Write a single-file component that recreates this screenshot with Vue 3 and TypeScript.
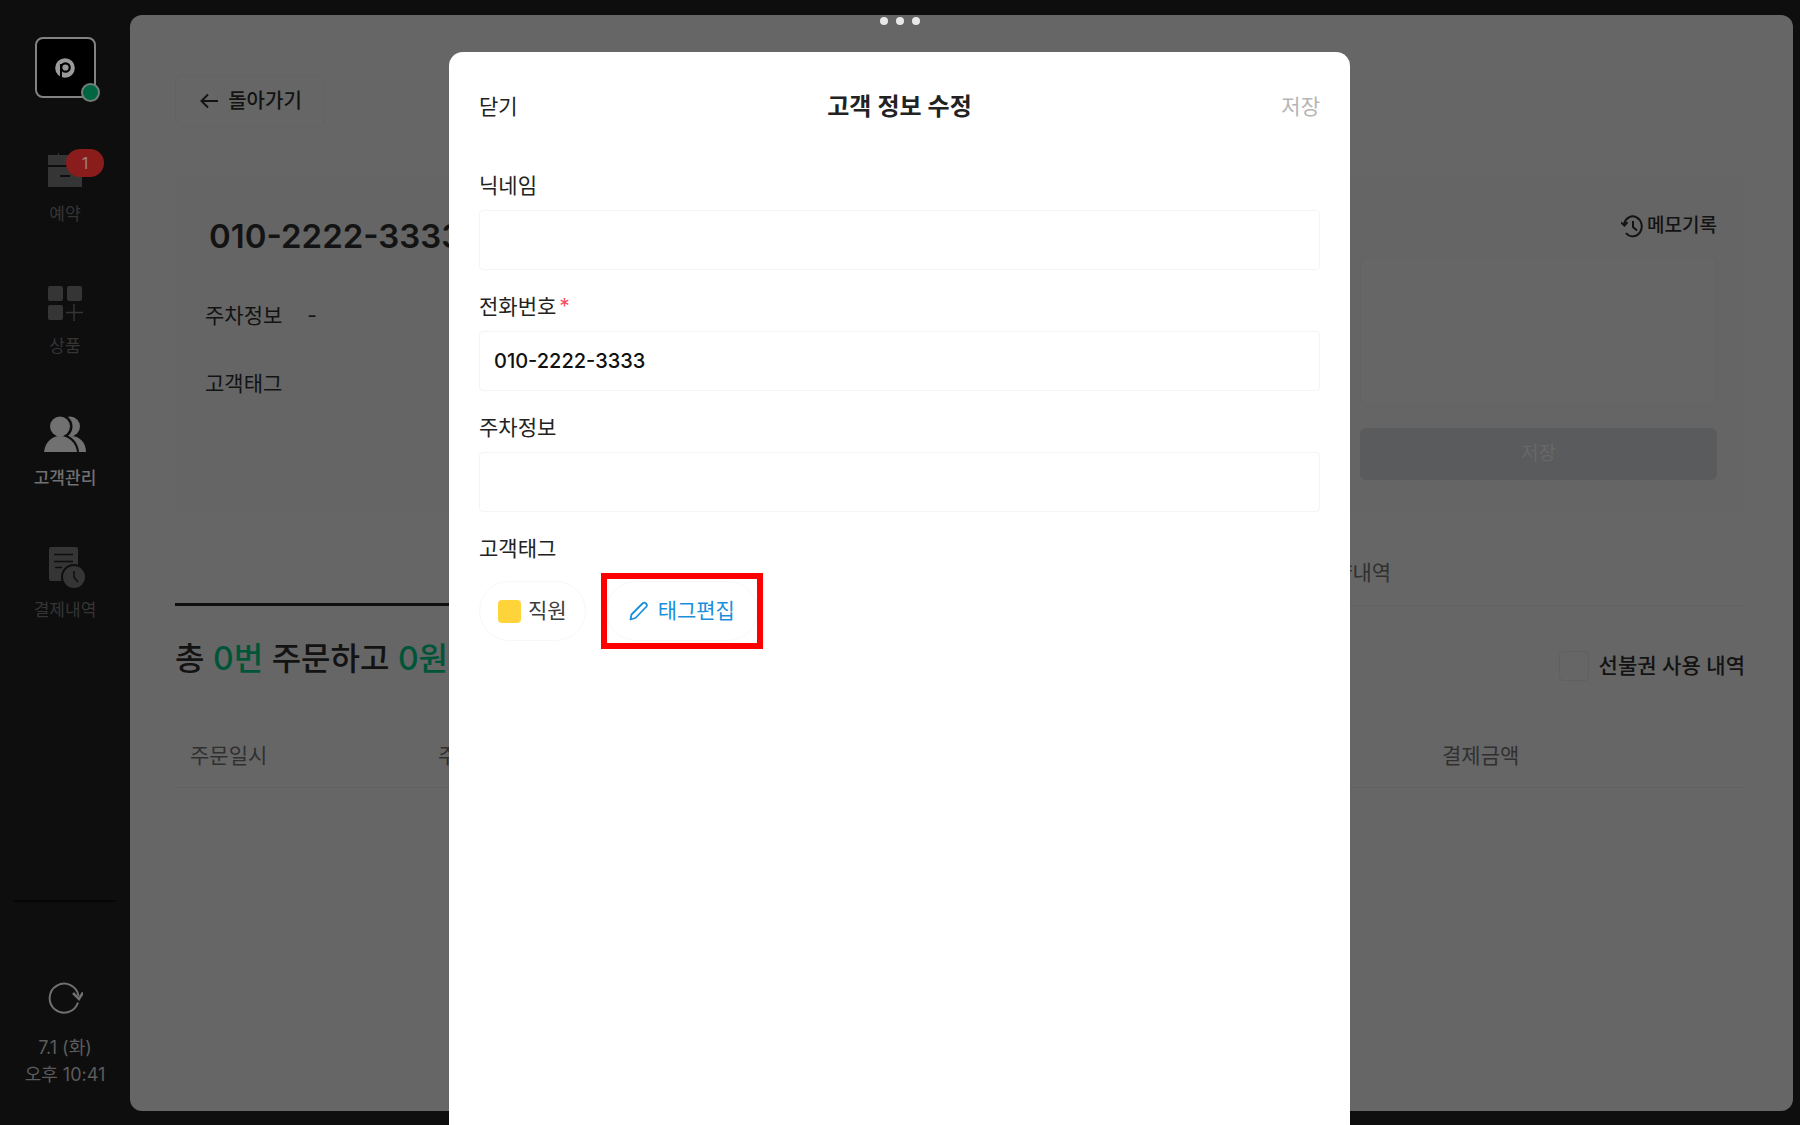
<script setup lang="ts">
import { ref } from 'vue'

interface MenuItem {
  id: 'booking' | 'product' | 'customer' | 'payment'
  label: string
  badge?: number
}

const menu: MenuItem[] = [
  { id: 'booking', label: '예약', badge: 1 },
  { id: 'product', label: '상품' },
  { id: 'customer', label: '고객관리' },
  { id: 'payment', label: '결제내역' },
]
const current = ref<MenuItem['id']>('customer')

const nickname = ref('')
const phone = ref('010-2222-3333')
const parking = ref('')
const memo = ref('')
const prepaidOnly = ref(false)
</script>

<template>
  <div class="app">
    <aside class="sidebar">
      <div class="logo">
        <svg width="20" height="20" viewBox="0 0 20 20" aria-hidden="true">
          <circle cx="10" cy="10" r="9.800" fill="#9a9a9a" />
          <path d="M6 20V6" stroke="#000" stroke-width="2" />
          <circle cx="10.500" cy="9.500" r="4.200" fill="#9a9a9a" stroke="#000" stroke-width="2.200" />
        </svg>
        <span class="status"></span>
      </div>

      <nav class="menu">
        <button
          v-for="item in menu"
          :key="item.id"
          type="button"
          class="menu-item"
          :class="{ active: item.id === current }"
        >
          <span class="menu-icon">
            <svg v-if="item.id === 'booking'" width="44" height="44" viewBox="0 0 44 44" fill="currentColor">
              <path d="M5 6h10V4h1v2h23v10H5zM5 18h34v20H5z" />
              <path d="M17 27h10" stroke="#0e0e0e" stroke-width="2" />
            </svg>
            <svg v-else-if="item.id === 'product'" width="44" height="44" viewBox="0 0 44 44" fill="currentColor">
              <rect x="5" y="5" width="15" height="15" rx="2" />
              <rect x="24" y="5" width="15" height="15" rx="2" />
              <rect x="5" y="24" width="15" height="15" rx="2" />
              <path d="M31 23v17M23 31.500h17" stroke="currentColor" stroke-width="1.500" />
            </svg>
            <svg v-else-if="item.id === 'customer'" width="44" height="44" viewBox="0 0 44 44" fill="currentColor">
              <circle cx="27" cy="13.500" r="10" />
              <path d="M15 39c0-9 6-16 13-16 8 0 15 6 15 16z" />
              <path d="M0 40c0-10 8-15 17.500-17.500S36 30 36 40z" fill="#0e0e0e" />
              <circle cx="17.500" cy="13.500" r="12" fill="#0e0e0e" />
              <circle cx="17" cy="13.500" r="10" />
              <path d="M1 39c1-9 7-16 16-16s16 7 17 16z" />
            </svg>
            <svg v-else width="44" height="44" viewBox="0 0 44 44" fill="currentColor">
              <rect x="6" y="2" width="29" height="34" rx="2" />
              <path d="M11 9.500h19M11 16.500h19M12 22.500h7" stroke="#0e0e0e" stroke-width="1.500" />
              <circle cx="31" cy="32" r="13" fill="#0e0e0e" />
              <circle cx="31" cy="32" r="11" />
              <path d="M31 26v6l4 5" fill="none" stroke="#0e0e0e" stroke-width="1.500" />
            </svg>
            <span v-if="item.badge" class="badge">{{ item.badge }}</span>
          </span>
          <span>{{ item.label }}</span>
        </button>
      </nav>

      <div class="sidebar-foot">
        <button type="button" class="refresh" aria-label="새로고침">
          <svg width="36" height="34" viewBox="0 0 36 34" fill="none" stroke="#707070" stroke-width="2">
            <path d="M31 22.500A14.500 14.500 0 1 1 31.500 16" />
            <path d="M26 13l6 6 4-6.500" stroke-width="2.500" />
          </svg>
        </button>
        <p class="clock">7.1 (화)<br />오후 10:41</p>
      </div>
    </aside>

    <main class="panel">
      <button type="button" class="back">
        <svg width="18" height="16" viewBox="0 0 18 16" fill="none" stroke="currentColor" stroke-width="2">
          <path d="M18 8H1.500M8 1.500L1.500 8 8 14.500" />
        </svg>
        돌아가기
      </button>

      <section class="profile">
        <div class="profile-info">
          <h1>010-2222-3333</h1>
          <dl>
            <div><dt>주차정보</dt><dd>-</dd></div>
            <div><dt>고객태그</dt><dd></dd></div>
          </dl>
        </div>
        <div class="memo">
          <button type="button" class="memo-log">
            <svg width="22" height="24" viewBox="0 0 22 24" fill="none" stroke="currentColor" stroke-width="2">
              <path d="M3 10A9 10 0 1 1 5 19" />
              <path d="M0 8.500l3.500 3 3-3.500" />
              <path d="M12 7v6l4 3.500" />
            </svg>
            메모기록
          </button>
          <textarea v-model="memo" aria-label="메모"></textarea>
          <button type="button" class="memo-save" disabled>저장</button>
        </div>
      </section>

      <div class="tabs" role="tablist">
        <button type="button" role="tab" aria-selected="true" class="tab active">주문내역</button>
        <button type="button" role="tab" aria-selected="false" class="tab">예약내역</button>
      </div>

      <div class="summary">
        <h2>총 <em>0번</em> 주문하고 <em>0원</em></h2>
        <label class="prepaid">
          <input v-model="prepaidOnly" type="checkbox" />
          선불권 사용 내역
        </label>
      </div>

      <table class="orders">
        <thead>
          <tr>
            <th class="col-date">주문일시</th>
            <th>주문번호</th>
            <th class="col-amount">결제금액</th>
          </tr>
        </thead>
      </table>
    </main>

    <div class="window-dots" aria-hidden="true"><i></i><i></i><i></i></div>

    <form class="modal" role="dialog" aria-labelledby="modal-title" @submit.prevent>
      <header class="modal-head">
        <button type="button">닫기</button>
        <h2 id="modal-title">고객 정보 수정</h2>
        <button type="submit" class="save" disabled>저장</button>
      </header>

      <div class="field">
        <label for="nickname">닉네임</label>
        <input id="nickname" v-model="nickname" type="text" />
      </div>
      <div class="field">
        <label for="phone">전화번호<span class="required">*</span></label>
        <input id="phone" v-model="phone" type="tel" />
      </div>
      <div class="field">
        <label for="parking">주차정보</label>
        <input id="parking" v-model="parking" type="text" />
      </div>
      <div class="field">
        <span class="field-title">고객태그</span>
        <div class="tags">
          <button type="button" class="tag"><span class="swatch"></span>직원</button>
          <button type="button" class="tag edit">
            <svg width="20" height="20" viewBox="0 0 20 20" fill="none" stroke="currentColor" stroke-width="1.800" stroke-linejoin="round">
              <path d="M1.500 18.500l1-5L14 2q1.500-1 3 .5t.5 3L6.500 17z" />
            </svg>
            태그편집
            <span class="marker"></span>
          </button>
        </div>
      </div>
    </form>
  </div>
</template>

<style>
body {
  margin: 0;
  background: #0e0e0e;
}
</style>

<style scoped>
* {
  box-sizing: border-box;
}

.app {
  position: relative;
  display: flex;
  min-height: 100vh;
  background: #0e0e0e;
  color: #131313;
  font-family: Inter, "Noto Sans CJK KR", sans-serif;
  font-size: 21px;
  line-height: 32px;
}

button,
input,
textarea {
  font: inherit;
  color: inherit;
}

button {
  padding: 0;
  border: 0;
  background: none;
}

h1,
h2,
p,
dl,
dd {
  margin: 0;
}

/* Sidebar */
.sidebar {
  display: flex;
  flex-direction: column;
  align-items: center;
  flex: none;
  width: 130px;
  padding: 37px 14px;
}

.logo {
  position: relative;
  display: grid;
  place-items: center;
  width: 61px;
  height: 61px;
  border: 2px solid #828282;
  border-radius: 8px;
  background: #000;
}

.status {
  position: absolute;
  right: -6px;
  bottom: -6px;
  width: 19px;
  height: 19px;
  border: 2px solid #6f7f78;
  border-radius: 50%;
  background: #006541;
}

.menu {
  display: flex;
  flex-direction: column;
  align-self: stretch;
  gap: 48px;
  margin-top: 51px;
}

.menu-item {
  display: flex;
  flex-direction: column;
  align-items: center;
  gap: 7px;
  height: 84px;
  color: #353535;
  font-size: 17px;
  line-height: 28px;
}

.menu-item.active {
  color: #717171;
  font-weight: 500;
}

.menu-icon {
  position: relative;
  width: 44px;
  height: 44px;
}

.menu-icon svg {
  display: block;
}

.badge {
  position: absolute;
  top: 0;
  left: 23px;
  width: 38px;
  height: 28px;
  border-radius: 14px;
  background: #8a1c1c;
  color: #a08080;
  font-size: 16px;
}

.sidebar-foot {
  align-self: stretch;
  margin-top: auto;
  padding-top: 78px;
  border-top: 2px solid #060606;
  text-align: center;
}

.refresh svg {
  display: block;
}

.clock {
  margin-top: 11px;
  color: #5c5c5c;
  font-size: 18px;
  line-height: 27px;
}

/* Customer page */
.panel {
  flex: 1;
  min-width: 0;
  margin: 15px 7px 14px 0;
  padding: 60px 48px 0 45px;
  border-radius: 12px;
  background: #666;
}

.back {
  display: flex;
  align-items: center;
  justify-content: center;
  gap: 10px;
  width: 150px;
  height: 52px;
  padding-left: 2px;
  border: 1px solid #636363;
  border-radius: 8px;
  font-size: 20px;
  font-weight: 500;
}

.profile {
  display: flex;
  justify-content: space-between;
  height: 335px;
  margin-top: 49px;
  padding: 34px 28px 31px 30px;
  background: #656565;
}

h1 {
  padding: 6px 4px;
  font-size: 33px;
  font-weight: 600;
  line-height: 40px;
}

dl {
  display: flex;
  flex-direction: column;
  gap: 36px;
  margin-top: 38px;
}

dl > div {
  display: flex;
  gap: 25px;
}

.memo {
  display: flex;
  flex-direction: column;
  width: 357px;
}

.memo-log {
  display: flex;
  align-items: center;
  align-self: flex-end;
  gap: 4px;
  font-size: 19px;
  font-weight: 500;
}

.memo textarea {
  height: 148px;
  margin: 15px 0 23px;
  border: 1px solid #636363;
  border-radius: 6px;
  background: #666;
  resize: none;
}

.memo-save {
  height: 52px;
  border-radius: 6px;
  background: #5a5b5c;
  color: #686868;
  font-size: 19px;
}

.tabs {
  display: flex;
  height: 64px;
  margin-top: 31px;
}

.tab {
  flex: 1;
  padding-bottom: 2px;
  border-bottom: 1px solid #616161;
  color: #303030;
}

.tab.active {
  border-bottom: 3px solid #0e0e0e;
}

.summary {
  display: flex;
  align-items: center;
  justify-content: space-between;
  height: 120px;
}

.summary h2 {
  margin-bottom: 14px;
  font-size: 32px;
  font-weight: 500;
  line-height: 48px;
}

.summary em {
  color: #005538;
  font-style: normal;
}

.prepaid {
  display: flex;
  align-items: center;
  gap: 10px;
  font-weight: 500;
}

.prepaid input {
  width: 30px;
  height: 30px;
  margin: 0;
  border: 1px solid #606060;
  border-radius: 4px;
  appearance: none;
}

.orders {
  width: 100%;
  border-collapse: collapse;
  table-layout: fixed;
}

.orders th {
  height: 61px;
  padding: 0 15px;
  border-bottom: 1px solid #616161;
  color: #303030;
  font-weight: 400;
  text-align: left;
}

.orders .col-date {
  width: 248px;
}

.orders .col-amount {
  width: 318px;
}

/* Edit dialog */
.window-dots {
  position: absolute;
  top: 17px;
  left: 0;
  right: 0;
  display: flex;
  justify-content: center;
  gap: 8px;
}

.window-dots i {
  width: 8px;
  height: 8px;
  border-radius: 50%;
  background: #e8e8e8;
}

.modal {
  position: absolute;
  top: 52px;
  bottom: 0;
  left: calc(25% - 1px);
  right: 25%;
  padding: 39px 30px 0;
  border-radius: 14px 14px 0 0;
  background: #fff;
  color: #222;
}

.modal-head {
  display: flex;
  align-items: center;
  justify-content: space-between;
  margin-bottom: 47px;
}

.modal-head h2 {
  font-size: 24px;
  font-weight: 600;
}

.modal-head .save {
  color: #b5b5b5;
}

.field {
  display: flex;
  flex-direction: column;
  gap: 8px;
  margin-bottom: 21px;
}

.required {
  margin-left: 3px;
  color: #ff4d5e;
}

.field input {
  width: 100%;
  height: 60px;
  padding: 0 14px;
  border: 1px solid #f4f4f4;
  border-radius: 4px;
  background: #fff;
  color: #111;
  font-size: 20px;
  font-weight: 500;
}

.tags {
  display: flex;
  gap: 20px;
  padding-top: 8px;
}

.tag {
  display: flex;
  align-items: center;
  gap: 7px;
  height: 60px;
  padding: 0 18px;
  border: 1px solid #f8f8f8;
  border-radius: 30px;
  color: #3c3c3c;
}

.swatch {
  width: 23px;
  height: 23px;
  border-radius: 4px;
  background: #ffd43b;
}

.tag.edit {
  position: relative;
  gap: 9px;
  padding: 0 22px;
  color: #1a8fdc;
}

.marker {
  position: absolute;
  inset: -9px -6px;
  border: 6px solid #f00;
}
</style>
